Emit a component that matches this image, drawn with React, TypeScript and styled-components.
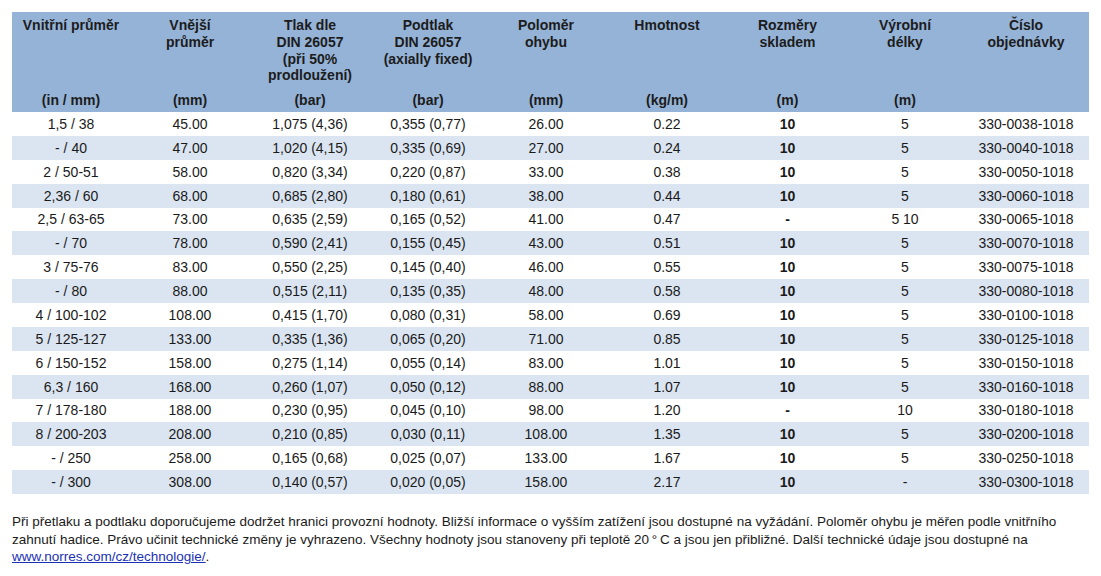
import React from "react";
import styled, { createGlobalStyle } from "styled-components";

const GlobalStyle = createGlobalStyle`
  html, body { margin: 0; padding: 0; background: #ffffff; }
  body { font-family: "Liberation Sans", Arial, Helvetica, sans-serif; color: #1a1a1a; }
`;

const COLS = "118px 120px 120px 116px 120px 122px 119px 116px 126px";

const Page = styled.div`
  padding: 12px 12px 0 12px;
  width: 1077px;
`;

const Table = styled.div`
  display: flex;
  flex-direction: column;
  width: 1077px;
`;

const HeaderRow = styled.div`
  display: grid;
  grid-template-columns: ${COLS};
  height: 100px;
  background: #95b3d7;
`;

const HeadCell = styled.div`
  display: flex;
  flex-direction: column;
  justify-content: space-between;
  align-items: center;
  text-align: center;
  padding: 5px 2px 3px;
  font-size: 14px;
  font-weight: bold;
  line-height: 16.8px;
  color: #1c1c1c;
  white-space: nowrap;
`;

const HeadTitle = styled.div``;
const HeadUnit = styled.div`
  min-height: 16.8px;
`;

const Row = styled.div<{ $alt: boolean }>`
  display: grid;
  grid-template-columns: ${COLS};
  height: 23.875px;
  background: ${(p) => (p.$alt ? "#dbe5f1" : "#ffffff")};
`;

const Cell = styled.div<{ $bold?: boolean }>`
  display: flex;
  align-items: center;
  justify-content: center;
  font-size: 14px;
  font-weight: ${(p) => (p.$bold ? "bold" : "normal")};
  color: #1a1a1a;
  white-space: nowrap;
`;

const Note = styled.p`
  margin: 19px 0 0 0;
  font-size: 13.5px;
  line-height: 17.5px;
  color: #1a1a1a;
`;

const Link = styled.a`
  color: #1a31b5;
  text-decoration: underline;
`;

const headers: { title: React.ReactNode; unit: string }[] = [
  { title: "Vnitřní průměr", unit: "(in / mm)" },
  { title: <>Vnější<br />průměr</>, unit: "(mm)" },
  { title: <>Tlak dle<br />DIN 26057<br />(při 50%<br />prodloužení)</>, unit: "(bar)" },
  { title: <>Podtlak<br />DIN 26057<br />(axially fixed)</>, unit: "(bar)" },
  { title: <>Poloměr<br />ohybu</>, unit: "(mm)" },
  { title: "Hmotnost", unit: "(kg/m)" },
  { title: <>Rozměry<br />skladem</>, unit: "(m)" },
  { title: <>Výrobní<br />délky</>, unit: "(m)" },
  { title: <>Číslo<br />objednávky</>, unit: "" },
];

const rows: string[][] = [
  ["1,5 / 38", "45.00", "1,075 (4,36)", "0,355 (0,77)", "26.00", "0.22", "10", "5", "330-0038-1018"],
  ["- / 40", "47.00", "1,020 (4,15)", "0,335 (0,69)", "27.00", "0.24", "10", "5", "330-0040-1018"],
  ["2 / 50-51", "58.00", "0,820 (3,34)", "0,220 (0,87)", "33.00", "0.38", "10", "5", "330-0050-1018"],
  ["2,36 / 60", "68.00", "0,685 (2,80)", "0,180 (0,61)", "38.00", "0.44", "10", "5", "330-0060-1018"],
  ["2,5 / 63-65", "73.00", "0,635 (2,59)", "0,165 (0,52)", "41.00", "0.47", "-", "5 10", "330-0065-1018"],
  ["- / 70", "78.00", "0,590 (2,41)", "0,155 (0,45)", "43.00", "0.51", "10", "5", "330-0070-1018"],
  ["3 / 75-76", "83.00", "0,550 (2,25)", "0,145 (0,40)", "46.00", "0.55", "10", "5", "330-0075-1018"],
  ["- / 80", "88.00", "0,515 (2,11)", "0,135 (0,35)", "48.00", "0.58", "10", "5", "330-0080-1018"],
  ["4 / 100-102", "108.00", "0,415 (1,70)", "0,080 (0,31)", "58.00", "0.69", "10", "5", "330-0100-1018"],
  ["5 / 125-127", "133.00", "0,335 (1,36)", "0,065 (0,20)", "71.00", "0.85", "10", "5", "330-0125-1018"],
  ["6 / 150-152", "158.00", "0,275 (1,14)", "0,055 (0,14)", "83.00", "1.01", "10", "5", "330-0150-1018"],
  ["6,3 / 160", "168.00", "0,260 (1,07)", "0,050 (0,12)", "88.00", "1.07", "10", "5", "330-0160-1018"],
  ["7 / 178-180", "188.00", "0,230 (0,95)", "0,045 (0,10)", "98.00", "1.20", "-", "10", "330-0180-1018"],
  ["8 / 200-203", "208.00", "0,210 (0,85)", "0,030 (0,11)", "108.00", "1.35", "10", "5", "330-0200-1018"],
  ["- / 250", "258.00", "0,165 (0,68)", "0,025 (0,07)", "133.00", "1.67", "10", "5", "330-0250-1018"],
  ["- / 300", "308.00", "0,140 (0,57)", "0,020 (0,05)", "158.00", "2.17", "10", "-", "330-0300-1018"],
];

export default function App() {
  return (
    <>
      <GlobalStyle />
      <Page>
        <Table>
          <HeaderRow>
            {headers.map((h, i) => (
              <HeadCell key={i}>
                <HeadTitle>{h.title}</HeadTitle>
                <HeadUnit>{h.unit}</HeadUnit>
              </HeadCell>
            ))}
          </HeaderRow>
          {rows.map((r, ri) => (
            <Row key={ri} $alt={ri % 2 === 1}>
              {r.map((c, ci) => (
                <Cell key={ci} $bold={ci === 6}>
                  {c}
                </Cell>
              ))}
            </Row>
          ))}
        </Table>
        <Note>
          Při přetlaku a podtlaku doporučujeme dodržet hranici provozní hodnoty. Bližší informace o vyšším
          zatížení jsou dostupné na vyžádání. Poloměr ohybu je měřen podle vnitřního zahnutí hadice. Právo
          učinit technické změny je vyhrazeno. Všechny hodnoty jsou stanoveny při teplotě 20{"\u2009"}°{"\u2009"}C a jsou jen
          přibližné. Další technické údaje jsou dostupné na{" "}
          <Link href="#">www.norres.com/cz/technologie/</Link>.
        </Note>
      </Page>
    </>
  );
}
